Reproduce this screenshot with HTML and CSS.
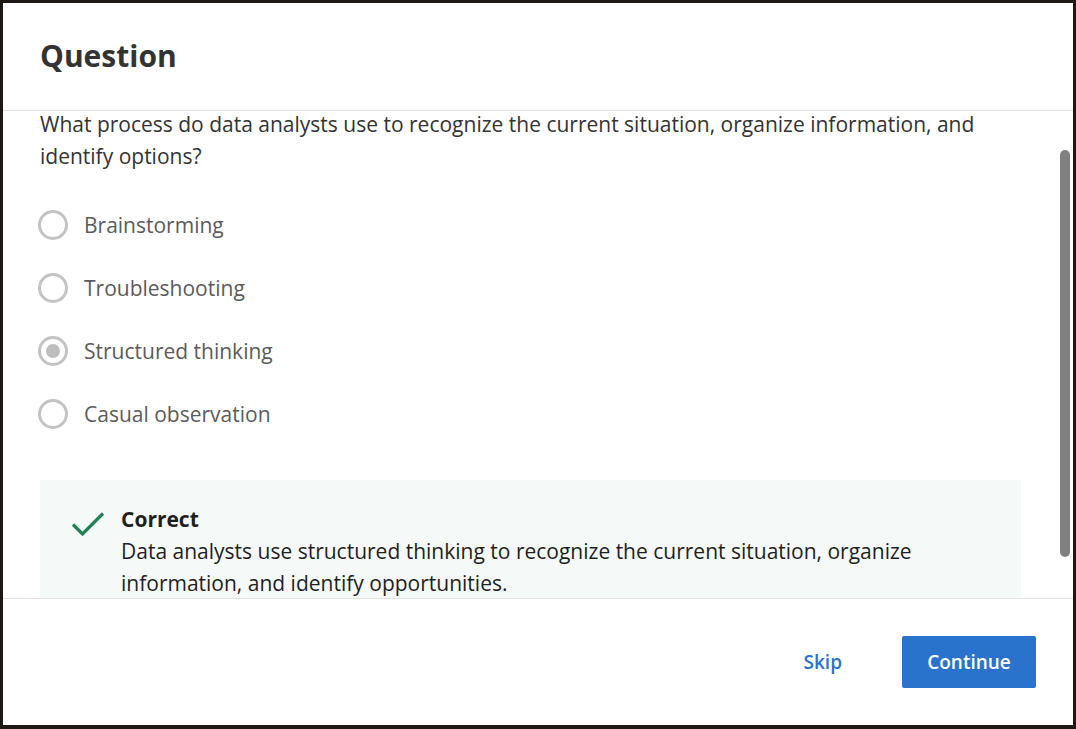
FILE: index.html
```html
<!DOCTYPE html>
<html>
<head>
<meta charset="utf-8">
<link rel="stylesheet" href="styles.css">
</head>
<body>
<div class="modal">
  <div class="header"><h2 class="title">Question</h2></div>
  <div class="body">
    <div class="content">
      <p class="prompt">What process do data analysts use to recognize the current situation, organize information, and identify options?</p>
      <div class="options">
        <div class="option"><span class="radio"></span><span class="label">Brainstorming</span></div>
        <div class="option"><span class="radio"></span><span class="label">Troubleshooting</span></div>
        <div class="option"><span class="radio checked"></span><span class="label">Structured thinking</span></div>
        <div class="option"><span class="radio"></span><span class="label">Casual observation</span></div>
      </div>
      <div class="feedback">
        <svg class="check" width="34" height="26" viewBox="0 0 34 26"><path d="M2 13.5 L11.5 23 L32 2.5" fill="none" stroke="#1f8354" stroke-width="3.2"/></svg>
        <div class="fb-text">
          <div class="fb-title">Correct</div>
          <div class="fb-desc">Data analysts use structured thinking to recognize the current situation, organize information, and identify opportunities.</div>
        </div>
      </div>
    </div>
    <div class="thumb"></div>
  </div>
  <div class="footer">
    <button class="skip">Skip</button>
    <button class="continue">Continue</button>
  </div>
</div>
</body>
</html>
```
FILE: styles.css
```css
html, body { margin: 0; padding: 0; }
body {
  background: #1c1814;
  width: 1076px;
  height: 729px;
  padding: 3px;
  box-sizing: border-box;
  font-family: "Open Sans", "DejaVu Sans", sans-serif;
}
.modal {
  width: 1070px;
  height: 722px;
  background: #fff;
  display: flex;
  flex-direction: column;
}
.header {
  height: 107px;
  border-bottom: 1px solid #e1e1e1;
  display: flex;
  align-items: center;
  padding-left: 37px;
  flex-shrink: 0;
}
.title {
  margin: 0;
  font-size: 30px;
  font-weight: 700;
  color: #333;
  line-height: 36px;
  padding-bottom: 1px;
}
.body {
  position: relative;
  flex: 1;
  overflow: hidden;
}
.content {
  padding: 0 52px 0 37px;
  margin-top: -3px;
}
.prompt {
  margin: 0;
  font-size: 21px;
  line-height: 32px;
  color: #333;
}
.options {
  display: flex;
  flex-direction: column;
  gap: 31px;
  margin-top: 37px;
  padding-left: 0;
}
.option {
  display: flex;
  align-items: center;
  height: 32px;
}
.radio {
  width: 24px;
  height: 24px;
  border: 3px solid #c3c3c3;
  border-radius: 50%;
  box-sizing: content-box;
  margin-left: -2px;
  margin-right: 16px;
  display: flex;
  align-items: center;
  justify-content: center;
}
.radio.checked::after {
  content: "";
  width: 14px;
  height: 14px;
  border-radius: 50%;
  background: #bdbdbd;
}
.label {
  font-size: 21px;
  color: #5b5b5b;
  line-height: 32px;
}
.feedback {
  margin-top: 50px;
  background: #f5f9f8;
  display: flex;
  padding: 23px 30px 24px 31px;
  gap: 16px;
}
.check { margin-top: 8px; flex-shrink: 0; }
.fb-title {
  font-size: 21px;
  font-weight: 700;
  color: #1f1f1f;
  line-height: 32px;
}
.fb-desc {
  font-size: 21px;
  line-height: 32px;
  color: #1f1f1f;
}
.thumb {
  position: absolute;
  right: 3px;
  top: 39px;
  width: 10px;
  height: 407px;
  background: #808080;
  border-radius: 5px;
}
.footer {
  flex-shrink: 0;
  height: 127px;
  border-top: 1px solid #e1e1e1;
  display: flex;
  align-items: center;
  justify-content: flex-end;
  padding-right: 37px;
  gap: 24px;
  box-sizing: border-box;
}
button {
  font-family: inherit;
  cursor: pointer;
}
.skip {
  background: none;
  border: none;
  color: #2a73cc;
  font-size: 19px;
  font-weight: 600;
  padding: 12px 36px;
}
.continue {
  width: 134px;
  height: 52px;
  background: #2a73cc;
  color: #fff;
  border: none;
  border-radius: 2px;
  font-size: 19px;
  font-weight: 600;
}
```
